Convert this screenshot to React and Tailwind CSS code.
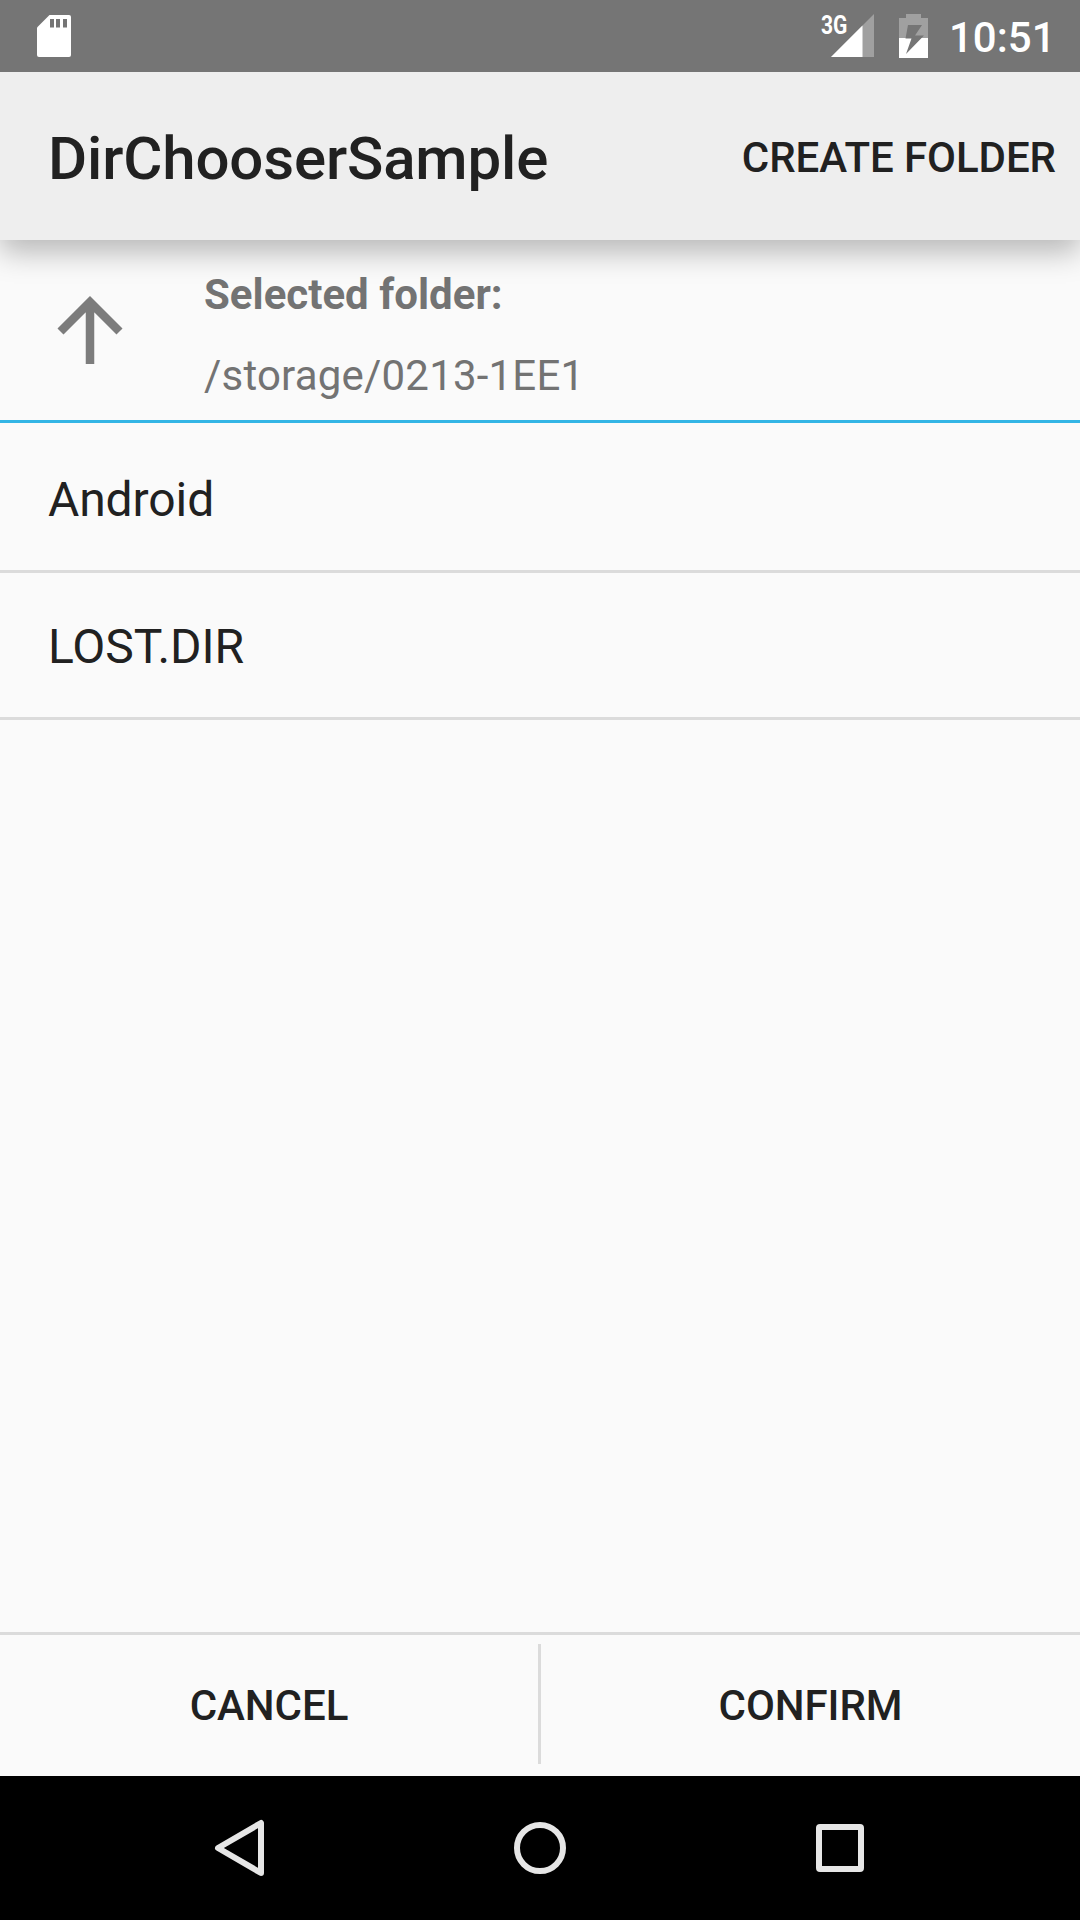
const caps = "font-medium text-[42px] leading-[56px] whitespace-nowrap tracking-[-0.06px]";

function StatusBar() {
  return (
    <header className="z-20 flex h-[72px] items-start bg-[#757575] text-white">
      <svg className="mt-[15px] ml-[37px] h-[42px] w-[34px]" viewBox="0 0 34 42">
        <path fill="#fff" d="M12.500 0H32a2 2 0 0 1 2 2v38a2 2 0 0 1-2 2H2a2 2 0 0 1-2-2V12.500z" />
        <path fill="#757575" d="M13 4h4v8.500h-4zM19 4h4v8.500h-4zM26 4h4v8.500h-4z" />
      </svg>
      <span className="mt-[9px] ml-auto w-[10px] origin-left scale-x-[0.81] text-[26px] leading-[32px] font-bold">3G</span>
      <svg className="mt-[14px] h-[43px] w-[43px]" viewBox="0 0 43 43">
        <path fill="#a0a0a0" d="M43 0v43H0z" />
        <path fill="#fff" d="M31.500 11.500V43H0z" />
      </svg>
      <svg className="mt-[14px] ml-[25px] h-[44px] w-[29px]" viewBox="0 0 29 44">
        <path fill="#a0a0a0" d="M7 0h15v4h7v20H0V4h7z" />
        <path fill="#fff" d="M0 24h29v20H0z" />
        <path fill="#757575" d="M9 11h14l-7 10.500h9L7 40l5.500-15.500h-6z" />
      </svg>
      <span className="mt-[9.5px] mr-[24.500px] ml-[21px] text-[42px] leading-[56px] font-medium">10:51</span>
    </header>
  );
}

export default function App() {
  return (
    <div className="flex h-[1920px] w-[1080px] flex-col bg-[#fafafa] font-[Roboto,sans-serif] text-[#212121]">
      <StatusBar />
      <div className="z-10 flex h-[168px] items-center justify-between bg-[#eeeeee] pr-6 pl-12 shadow-[0_12px_28px_0px_rgba(0,0,0,0.27)]">
        <h1 className="pt-[5px] text-[60px] font-medium tracking-[-0.15px]">DirChooserSample</h1>
        <button className={`pt-[3px] ${caps}`}>CREATE FOLDER</button>
      </div>
      <section className="flex h-[183px] items-start border-b-[3px] border-[#33b5e5] pl-[48px] text-[42px] text-[#737373]">
        <svg className="mt-[48px] h-[84px] w-[84px]" viewBox="0 0 84 84" fill="none" stroke="#7c7c7c" strokeWidth="8.500">
          <path d="M42 76V16M12.500 43.500L42 14l29.500 29.500" />
        </svg>
        <div className="ml-[72px] pt-[27px] leading-[56px]">
          <p className="font-bold">Selected folder:</p>
          <p className="mt-[25px] tracking-[0.2px]">/storage/0213-1EE1</p>
        </div>
      </section>
      <ul className="flex-1 text-[48px]">
        <li className="flex h-[150px] items-center border-b-[3px] border-[#dbdbdb] pt-[6px] pl-12 tracking-[-0.1px]">Android</li>
        <li className="flex h-[147px] items-center border-b-[3px] border-[#dbdbdb] pt-[3px] pl-12">LOST.DIR</li>
      </ul>
      <div className="flex h-[144px] items-center border-t-[3px] border-[#dbdbdb]">
        <button className={`w-[538px] ${caps}`}>CANCEL</button>
        <div className="mb-[3px] h-[120px] w-[3px] bg-[#dbdbdb]" />
        <button className={`flex-1 ${caps}`}>CONFIRM</button>
      </div>
      <nav className="h-[144px] bg-black">
        <svg className="h-[144px] w-[1080px]" fill="none" stroke="#e6e6e6" strokeWidth="6" strokeLinejoin="round">
          <path d="M261 47v50l-43-25z" />
          <circle cx="540" cy="72" r="23" />
          <rect x="819" y="51" width="42" height="42" rx="1" />
        </svg>
      </nav>
    </div>
  );
}
